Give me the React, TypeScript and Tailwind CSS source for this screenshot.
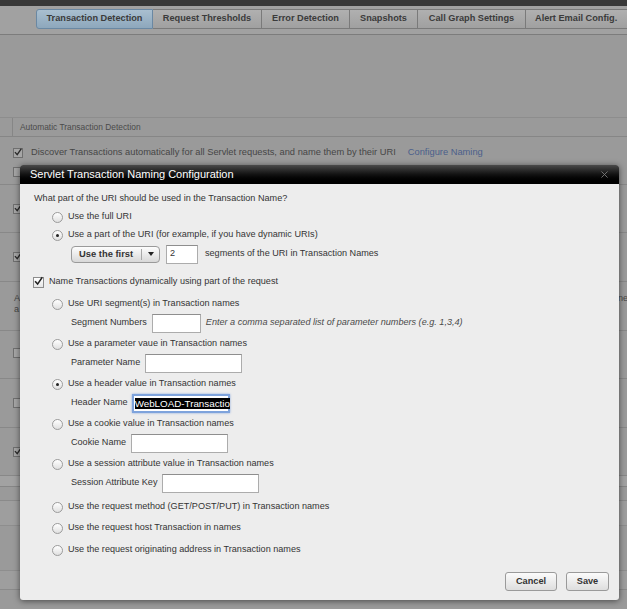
import React from 'react';

const TABS = [
  { label: 'Transaction Detection', w: 'w-[117px]', active: true },
  { label: 'Request Thresholds', w: 'w-[109px]' },
  { label: 'Error Detection', w: 'w-[88px]' },
  { label: 'Snapshots', w: 'w-[68px]' },
  { label: 'Call Graph Settings', w: 'w-[108px]' },
  { label: 'Alert Email Config.', w: 'w-[104px]' },
];

const CheckMark = ({ color = '#222' }: { color?: string }) => (
  <svg viewBox="0 0 10 10" className="h-[10px] w-[10px] -translate-y-[1px]">
    <path d="M1.2 5.2 L4 8.4 L9.2 0.8" stroke={color} strokeWidth="1.7" fill="none" />
  </svg>
);

const BgCheck = ({ checked }: { checked?: boolean }) => (
  <span className="inline-flex h-[10px] w-[10px] shrink-0 items-center justify-center border border-[#6f6f6f] bg-[#a6a6a6]">
    {checked && <CheckMark color="#2b2b2b" />}
  </span>
);

const Check = ({ checked }: { checked?: boolean }) => (
  <span className="inline-flex h-[11px] w-[11px] shrink-0 items-center justify-center border border-[#8c8c8c] bg-gradient-to-b from-white to-[#e6e6e6]">
    {checked && <CheckMark />}
  </span>
);

const Radio = ({ checked }: { checked?: boolean }) => (
  <span className="inline-flex h-[11px] w-[11px] shrink-0 items-center justify-center rounded-full border border-[#9b9b9b] bg-gradient-to-b from-white to-[#e0e0e0]">
    {checked && <span className="h-[3px] w-[3px] rounded-full bg-[#222]" />}
  </span>
);

const Option = ({ label, checked, className = '' }: { label: string; checked?: boolean; className?: string }) => (
  <div className={`flex h-[18px] items-center gap-[5px] pl-[19px] ${className}`}>
    <Radio checked={checked} />
    <span>{label}</span>
  </div>
);

const Field = ({ label, width, children }: { label: string; width: string; children?: React.ReactNode }) => (
  <div className="flex h-[20px] items-center gap-[5px] pl-[38px]">
    <span>{label}</span>
    <div className={`h-[19px] ${width} border border-[#acacac] border-t-[#8e8e8e] bg-white`} />
    {children}
  </div>
);

const Group = ({ label, field, width, checked, children }: { label: string; field: string; width: string; checked?: boolean; children?: React.ReactNode }) => (
  <div className="mb-[2px] flex flex-col">
    <Option label={label} checked={checked} />
    <Field label={field} width={width}>{children}</Field>
  </div>
);

export default function App() {
  return (
    <div className="relative h-[609px] w-[627px] overflow-hidden bg-[#9a9a9a] font-['Liberation_Sans',Arial,sans-serif] text-[9.1px] text-[#464646]">
      {/* page behind the modal */}
      <div className="h-[6px] bg-[#383838]" />
      <div className="flex h-[29px] items-start border-b border-[#7c7c7c] bg-[#a1a1a1] pl-[36px] pt-[3px]">
        {TABS.map((t, i) => (
          <div
            key={t.label}
            className={`flex h-[20px] shrink-0 items-center justify-center border text-[9.2px] font-bold text-[#3b3b3b] ${t.w} ${
              t.active
                ? 'rounded-l-[3px] border-[#6a88a3] bg-gradient-to-b from-[#a9bfd0] to-[#8da7bc]'
                : 'border-l-0 border-[#7a7a7a] bg-gradient-to-b from-[#b0b0b0] to-[#a0a0a0]'
            } ${i === TABS.length - 1 ? 'justify-start pl-[9px]' : ''}`}
          >
            {t.label}
          </div>
        ))}
      </div>
      <div className="h-[83px] border-b border-[#8d8d8d]" />

      <div className="flex h-[19px] border-b border-[#868686]">
        <div className="ml-[12px] flex flex-1 items-center border-l border-[#868686] pl-[7px] text-[8.4px] text-[#4a4a4a]">
          Automatic Transaction Detection
        </div>
      </div>

      <div className="flex h-[48px] flex-col border-b border-[#888] pl-[13px] pt-[10px]">
        <div className="flex h-[12px] items-center gap-[8px] text-[9.3px]">
          <BgCheck checked />
          <span>Discover Transactions automatically for all Servlet requests, and name them by their URI</span>
          <span className="ml-[4px] text-[#4b5f8b]">Configure Naming</span>
        </div>
        <div className="mt-[7px] flex h-[12px] items-center">
          <BgCheck />
        </div>
      </div>
      <div className="flex h-[48px] items-center border-b border-[#888] pl-[13px]"><BgCheck checked /></div>
      <div className="flex h-[49px] items-center border-b border-[#888] pl-[13px]"><BgCheck checked /></div>
      <div className="flex h-[49px] items-start justify-between border-b border-[#888] pl-[14px] pt-[11px] leading-[11px]">
        <div className="flex flex-col">
          <span>A</span>
          <span>a</span>
        </div>
        <span className="mr-[-1px]">ne</span>
      </div>
      <div className="flex h-[48px] items-center border-b border-[#888] pb-[4px] pl-[13px]"><BgCheck /></div>
      <div className="flex h-[49px] items-center border-b border-[#888] pl-[13px]"><BgCheck /></div>
      <div className="flex h-[48px] items-center border-b border-[#888] pl-[13px]"><BgCheck checked /></div>
      <div className="h-[11px] border-b border-[#868686] bg-[#a2a2a2]" />
      <div className="h-[14px] border-b border-[#8a8a8a]" />
      <div className="h-[25px] border-b border-[#8e8e8e] bg-[#9e9e9e]" />
      <div className="h-[45px] border-b border-[#8e8e8e]" />
      <div className="h-[19px] border-b border-[#8a8a8a] bg-[#9e9e9e]" />

      {/* modal dialog */}
      <div className="absolute left-[20px] top-[165px] flex h-[435px] w-[599px] flex-col rounded-[3px] bg-[#ededed] shadow-[0_1px_6px_rgba(0,0,0,0.55)]">
        <div className="flex h-[19px] shrink-0 items-center justify-between rounded-t-[3px] bg-gradient-to-b from-[#4a4a4a] via-[#121212] to-black pl-[10px] pr-[11px]">
          <span className="text-[11px] text-white">Servlet Transaction Naming Configuration</span>
          <svg viewBox="0 0 8 8" className="h-[7px] w-[7px]">
            <path d="M0.5 0.5 L7.5 7.5 M7.5 0.5 L0.5 7.5" stroke="#7c7c7c" strokeWidth="1" />
          </svg>
        </div>

        <div className="flex flex-1 flex-col pl-[13px] pr-[10px] pt-[6px] text-[#343434]">
          <div className="flex h-[18px] items-center pl-[1px]">What part of the URI should be used in the Transaction Name?</div>
          <Option label="Use the full URI" />
          <Option label="Use a part of the URI (for example, if you have dynamic URIs)" checked />
          <div className="flex h-[20px] items-center gap-[6px] pl-[38px]">
            <div className="flex h-[17px] w-[89px] items-center rounded-[4px] border border-[#9a9a9a] bg-gradient-to-b from-[#fdfdfd] to-[#d8d8d8]">
              <span className="flex-1 pl-[7px] text-[9.4px] font-bold text-[#333]">Use the first</span>
              <span className="h-[11px] w-px bg-[#a8a8a8]" />
              <span className="flex w-[17px] justify-center">
                <svg viewBox="0 0 6 4" className="h-[4px] w-[6px]">
                  <path d="M0 0 H6 L3 4 Z" fill="#222" />
                </svg>
              </span>
            </div>
            <div className="flex h-[19px] w-[32px] items-center border border-[#acacac] border-t-[#8e8e8e] bg-white pl-[3px]">2</div>
            <span className="ml-[1px]">segments of the URI in Transaction Names</span>
          </div>

          <div className="mt-[9px] flex h-[18px] items-center gap-[5px]">
            <Check checked />
            <span>Name Transactions dynamically using part of the request</span>
          </div>

          <div className="mt-[4px] flex flex-col">
            <Group label="Use URI segment(s) in Transaction names" field="Segment Numbers" width="w-[49px]">
              <span className="italic text-[#4a4a4a]">Enter a comma separated list of parameter numbers (e.g. 1,3,4)</span>
            </Group>
            <Group label="Use a parameter vaue in Transaction names" field="Parameter Name" width="w-[97px]" />
            <div className="mb-[2px] flex flex-col">
              <Option label="Use a header value in Transaction names" checked />
              <div className="flex h-[20px] items-center gap-[4px] pl-[38px]">
                <span>Header Name</span>
                <div className="flex h-[19px] w-[98px] items-center border-2 border-[#7ea3dc] bg-white pl-[1px] shadow-[0_0_2px_rgba(90,140,220,0.7)]">
                  <span className="whitespace-nowrap bg-black text-[9.8px] leading-[11px] text-white">WebLOAD-Transactio</span>
                </div>
              </div>
            </div>
            <Group label="Use a cookie value in Transaction names" field="Cookie Name" width="w-[97px]" />
            <Group label="Use a session attribute value in Transaction names" field="Session Attribute Key" width="w-[97px]" />
          </div>
          <Option label="Use the request method (GET/POST/PUT) in Transaction names" className="mt-[3px]" />
          <Option label="Use the request host Transaction in names" className="mt-[3px]" />
          <Option label="Use the request originating address in Transaction names" className="mt-[4px]" />

          <div className="mt-auto flex justify-end gap-[9px] pb-[9px]">
            <button className="h-[19px] w-[52px] rounded-[3px] border border-[#9a9a9a] bg-gradient-to-b from-[#fbfbfb] to-[#dedede] text-[9.2px] font-bold text-[#333]">
              Cancel
            </button>
            <button className="h-[19px] w-[43px] rounded-[3px] border border-[#9a9a9a] bg-gradient-to-b from-[#fbfbfb] to-[#dedede] text-[9.2px] font-bold text-[#333]">
              Save
            </button>
          </div>
        </div>
      </div>
    </div>
  );
}
